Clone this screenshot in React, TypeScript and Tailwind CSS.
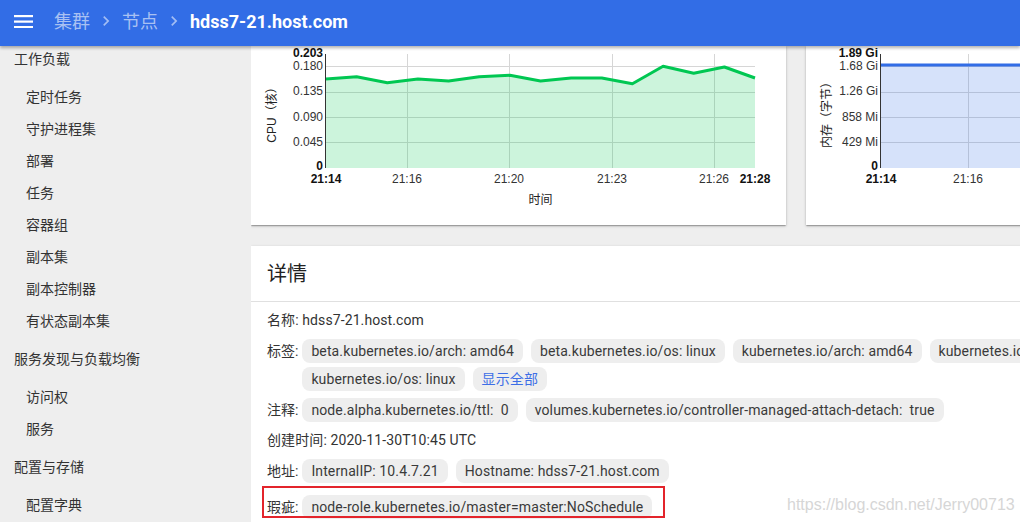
import React from "react";

const FONT = "Roboto, 'Noto Sans CJK SC', sans-serif";
const CHART_FONT = "'Liberation Sans', Arial, 'Noto Sans CJK SC', sans-serif";

function MenuIcon() {
  return (
    <svg width="19" height="13" viewBox="0 0 19 13" className="block">
      <rect x="0" y="0" width="19" height="2.2" fill="#fff" />
      <rect x="0" y="5.5" width="19" height="2.2" fill="#fff" />
      <rect x="0" y="11" width="19" height="2.2" fill="#fff" />
    </svg>
  );
}

function Chevron() {
  return (
    <svg width="20" height="20" viewBox="0 0 24 24" className="mx-[6px] block">
      <path d="M10 6 8.59 7.41 13.17 12l-4.58 4.59L10 18l6-6z" fill="rgba(255,255,255,0.55)" />
    </svg>
  );
}

type ChartProps = {
  title: string;
  yLabels: { t: string; y: number; b?: boolean }[];
  xLabels: { t: string; x: number; b?: boolean }[];
  gridY: number[];
  gridX: number[];
  ys: number[];
  color: string;
  showTimeLabel?: boolean;
};

function Chart({ title, yLabels, xLabels, gridY, gridX, ys, color, showTimeLabel }: ChartProps) {
  const left = 75;
  const right = 504;
  const top = 8;
  const bottom = 122;
  const step = (right - left) / (ys.length - 1);
  const pts = ys.map((y, i) => `${(left + i * step).toFixed(1)},${y}`).join(" ");
  return (
    <svg width="535" height="179" className="block" style={{ fontFamily: CHART_FONT }}>
      <g stroke="#d6d6d6" strokeWidth="1">
        {gridY.map((y) => (
          <line key={"h" + y} x1={left} x2={right} y1={y} y2={y} />
        ))}
        {gridX.map((x) => (
          <line key={"v" + x} x1={x} x2={x} y1={top} y2={bottom} />
        ))}
      </g>
      <polygon points={`${left},${bottom} ${pts} ${right},${bottom}`} fill={color} fillOpacity="0.2" />
      <polyline points={pts} fill="none" stroke={color} strokeWidth="3" strokeLinejoin="round" />
      <line x1="74.5" x2="74.5" y1={top} y2={bottom} stroke="#333" strokeWidth="1" />
      {yLabels.map((l) => (
        <text
          key={l.t}
          x="72"
          y={l.y}
          textAnchor="end"
          dominantBaseline="middle"
          fontSize="12"
          fontWeight={l.b ? 700 : 400}
          fill={l.b ? "#111" : "#333"}
        >
          {l.t}
        </text>
      ))}
      {xLabels.map((l) => (
        <text
          key={l.t}
          x={l.x}
          y="134"
          textAnchor="middle"
          dominantBaseline="middle"
          fontSize="12"
          fontWeight={l.b ? 700 : 400}
          fill={l.b ? "#111" : "#333"}
        >
          {l.t}
        </text>
      ))}
      {showTimeLabel && (
        <text x="289.5" y="155" textAnchor="middle" dominantBaseline="middle" fontSize="12" fill="#222">
          时间
        </text>
      )}
      <text
        x="0"
        y="0"
        transform="translate(22 66) rotate(-90)"
        textAnchor="middle"
        dominantBaseline="middle"
        fontSize="12"
        fill="#222"
      >
        {title}
      </text>
    </svg>
  );
}

function Chip({ children, link }: { children: React.ReactNode; link?: boolean }) {
  return (
    <span
      className={
        "inline-flex h-[24px] items-center whitespace-pre rounded-lg bg-[#eeeeee] px-[9px] text-[14px] tracking-[0.12px] " +
        (link ? "text-[#3d6ee6]" : "text-[#3a3a3a]")
      }
    >
      {children}
    </span>
  );
}

function ChipRow({ label, children, className }: { label: string; children: React.ReactNode; className?: string }) {
  return (
    <div className={"flex items-start " + (className ?? "")}>
      <span className="mr-[4px] flex h-[24px] shrink-0 items-center text-[14px] text-[#333]">{label}</span>
      <div className="flex flex-wrap gap-x-2 gap-y-1">{children}</div>
    </div>
  );
}

const sideItems: { t: string; h?: boolean }[] = [
  { t: "工作负载", h: true },
  { t: "定时任务" },
  { t: "守护进程集" },
  { t: "部署" },
  { t: "任务" },
  { t: "容器组" },
  { t: "副本集" },
  { t: "副本控制器" },
  { t: "有状态副本集" },
  { t: "服务发现与负载均衡", h: true },
  { t: "访问权" },
  { t: "服务" },
  { t: "配置与存储", h: true },
  { t: "配置字典" },
];

const cardShadow =
  "shadow-[0_1px_3px_rgba(0,0,0,0.2),0_1px_1px_rgba(0,0,0,0.14),0_2px_1px_-1px_rgba(0,0,0,0.12)]";

export default function App() {
  const cpuYs = [33, 30.7, 36.7, 33, 35, 30.7, 29.3, 35, 32, 32, 37.7, 20.3, 27.3, 21, 32];
  const memYs = Array.from({ length: 15 }, () => 19);
  return (
    <div
      className="relative flex h-[522px] w-[1020px] flex-col overflow-hidden bg-[#eeeeee]"
      style={{ fontFamily: FONT }}
    >
      <header className="relative z-10 h-[46px] shrink-0 bg-[#326de6] shadow-[0_2px_3px_rgba(0,0,0,0.3)]">
        <div className="flex h-[42px] items-center pl-[14px]">
          <MenuIcon />
          <span className="ml-[21px] text-[18px] text-[#a9c1f2]">集群</span>
          <Chevron />
          <span className="text-[18px] text-[#a9c1f2]">节点</span>
          <Chevron />
          <span className="text-[18px] font-bold text-white">hdss7-21.host.com</span>
        </div>
      </header>

      <div className="flex min-h-0 flex-1">
        <aside className="w-[251px] shrink-0 overflow-hidden">
          <div className="-mt-[9px]">
            {sideItems.map((it) =>
              it.h ? (
                <div key={it.t} className="flex h-[44px] items-center pl-[14px] text-[14px] text-[#333]">
                  {it.t}
                </div>
              ) : (
                <div key={it.t} className="flex h-[32px] items-center pl-[26px] text-[14px] text-[#333]">
                  {it.t}
                </div>
              )
            )}
          </div>
        </aside>

        <main className="min-w-0 flex-1 overflow-hidden">
          <div className="flex w-[1090px] flex-col">
            <div className="flex gap-[20px]">
              <div className={"h-[179px] w-[535px] shrink-0 bg-white " + cardShadow}>
                <Chart
                  title="CPU（核）"
                  ys={cpuYs}
                  color="#00c752"
                  showTimeLabel
                  gridY={[20.5, 46.5, 71.5, 96.5]}
                  gridX={[156.5, 258.5, 361.5, 463.5]}
                  yLabels={[
                    { t: "0.203", y: 8, b: true },
                    { t: "0.180", y: 20.5 },
                    { t: "0.135", y: 46 },
                    { t: "0.090", y: 71.5 },
                    { t: "0.045", y: 97 },
                    { t: "0", y: 121, b: true },
                  ]}
                  xLabels={[
                    { t: "21:14", x: 75, b: true },
                    { t: "21:16", x: 156 },
                    { t: "21:20", x: 258 },
                    { t: "21:23", x: 361 },
                    { t: "21:26", x: 463 },
                    { t: "21:28", x: 504, b: true },
                  ]}
                />
              </div>
              <div className={"h-[179px] w-[535px] shrink-0 bg-white " + cardShadow}>
                <Chart
                  title="内存（字节）"
                  ys={memYs}
                  color="#326de6"
                  gridY={[20.5, 46.5, 71.5, 96.5]}
                  gridX={[162.5, 259.5, 361.5, 463.5]}
                  yLabels={[
                    { t: "1.89 Gi", y: 8, b: true },
                    { t: "1.68 Gi", y: 20.5 },
                    { t: "1.26 Gi", y: 46 },
                    { t: "858 Mi", y: 71.5 },
                    { t: "429 Mi", y: 97 },
                    { t: "0", y: 121, b: true },
                  ]}
                  xLabels={[
                    { t: "21:14", x: 75, b: true },
                    { t: "21:16", x: 162 },
                    { t: "21:20", x: 259 },
                    { t: "21:23", x: 361 },
                    { t: "21:26", x: 463 },
                    { t: "21:28", x: 504, b: true },
                  ]}
                />
              </div>
            </div>

            <section className={"mt-[21px] w-[1090px] bg-white pb-[20px] " + cardShadow}>
              <div className="flex h-[56px] items-center border-b border-[#e0e0e0] pl-[16px] text-[20px] text-[#222]">
                详情
              </div>
              <div className="px-[16px] text-[14px] text-[#333]">
                <div className="mt-[6px] flex h-[24px] items-center tracking-[0.1px]">名称: hdss7-21.host.com</div>
                <ChipRow label="标签:" className="mt-[7px]">
                  <Chip>beta.kubernetes.io/arch: amd64</Chip>
                  <Chip>beta.kubernetes.io/os: linux</Chip>
                  <Chip>kubernetes.io/arch: amd64</Chip>
                  <Chip>kubernetes.io/hostname: hdss7-21.host.com</Chip>
                  <Chip>kubernetes.io/os: linux</Chip>
                  <Chip link>显示全部</Chip>
                </ChipRow>
                <ChipRow label="注释:" className="mt-[7px]">
                  <Chip>{"node.alpha.kubernetes.io/ttl:  0"}</Chip>
                  <Chip>{"volumes.kubernetes.io/controller-managed-attach-detach:  true"}</Chip>
                </ChipRow>
                <div className="mt-[6px] flex h-[24px] items-center tracking-[0.1px]">创建时间: 2020-11-30T10:45 UTC</div>
                <ChipRow label="地址:" className="mt-[7px]">
                  <Chip>InternalIP: 10.4.7.21</Chip>
                  <Chip>Hostname: hdss7-21.host.com</Chip>
                </ChipRow>
                <div className="relative mt-[12px]">
                  <ChipRow label="瑕疵:">
                    <Chip>node-role.kubernetes.io/master=master:NoSchedule</Chip>
                  </ChipRow>
                  <div className="pointer-events-none absolute left-[-5px] top-[-9px] h-[32px] w-[403px] border-2 border-[#e3242b]" />
                </div>
              </div>
            </section>
          </div>
        </main>
      </div>

      <div
        className="pointer-events-none absolute left-[787px] top-[493px] text-[16px] text-[#d6d6d6]"
        style={{ fontFamily: "'Liberation Sans', Arial, sans-serif" }}
      >
        https://blog.csdn.net/Jerry00713
      </div>
    </div>
  );
}
